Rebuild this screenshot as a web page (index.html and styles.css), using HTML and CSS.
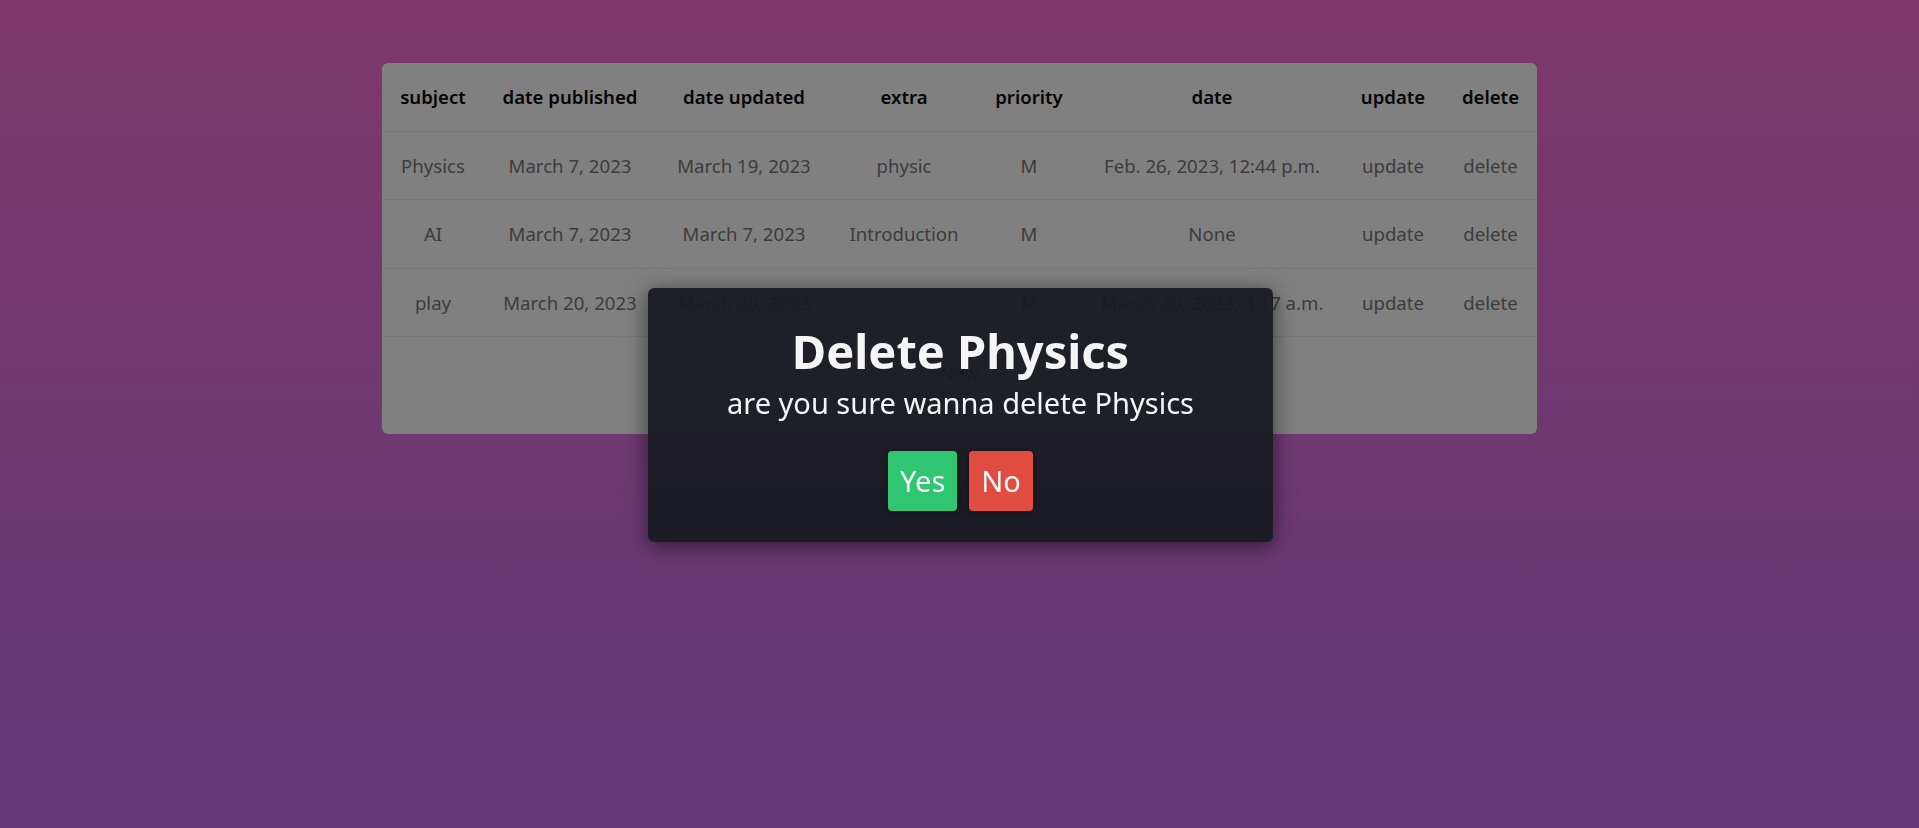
FILE: index.html
```html
<!DOCTYPE html>
<html lang="en">
<head>
<meta charset="utf-8">
<title>Subjects</title>
<link rel="stylesheet" href="styles.css">
</head>
<body>
<main class="page">
  <section class="card">
    <table class="table">
      <colgroup>
        <col class="c1"><col class="c2"><col class="c3"><col class="c4"><col class="c5"><col class="c6"><col class="c7"><col class="c8">
      </colgroup>
      <thead>
        <tr>
          <th>subject</th><th>date published</th><th>date updated</th><th>extra</th><th>priority</th><th>date</th><th>update</th><th>delete</th>
        </tr>
      </thead>
      <tbody>
        <tr>
          <td>Physics</td><td>March 7, 2023</td><td>March 19, 2023</td><td>physic</td><td>M</td><td>Feb. 26, 2023, 12:44 p.m.</td><td>update</td><td>delete</td>
        </tr>
        <tr>
          <td>AI</td><td>March 7, 2023</td><td>March 7, 2023</td><td>Introduction</td><td>M</td><td>None</td><td>update</td><td>delete</td>
        </tr>
        <tr>
          <td>play</td><td>March 20, 2023</td><td>March 20, 2023</td><td></td><td>M</td><td>March 20, 2023, 3:17 a.m.</td><td>update</td><td>delete</td>
        </tr>
      </tbody>
    </table>
    <div class="card-footer">
      <span class="new-btn">New</span>
    </div>
  </section>
</main>

<div class="modal">
  <h1 class="modal-title">Delete Physics</h1>
  <p class="modal-text">are you sure wanna delete Physics</p>
  <div class="modal-actions">
    <button class="btn btn-yes">Yes</button>
    <button class="btn btn-no">No</button>
  </div>
</div>
</body>
</html>
```

FILE: styles.css
```css
html, body {
  margin: 0;
  padding: 0;
  height: 100%;
}

body {
  background: linear-gradient(to bottom, #7e3869 0%, #623879 100%);
  font-family: "Noto Sans", "Open Sans", sans-serif;
  overflow: hidden;
}

.page {
  display: flex;
  justify-content: center;
  padding-top: 63px;
}

.card {
  width: 1155px;
  background: #808080;
  border-radius: 6px;
  overflow: hidden;
}

.table {
  width: 100%;
  border-collapse: collapse;
  table-layout: fixed;
  text-align: center;
  font-size: 18.6px;
}

.c1 { width: 102px; }
.c2 { width: 172px; }
.c3 { width: 176px; }
.c4 { width: 144px; }
.c5 { width: 106px; }
.c6 { width: 260px; }
.c7 { width: 102px; }
.c8 { width: 93px; }

.table th,
.table td {
  height: 67.5px;
  padding: 0;
  border-bottom: 1px solid #787878;
  white-space: nowrap;
}

.table th {
  color: #050505;
  font-weight: 600;
}

.table td {
  color: #3c3c3c;
  font-weight: 400;
}

.card-footer {
  display: flex;
  justify-content: center;
  padding: 15px 0 42px;
}

.new-btn {
  display: flex;
  align-items: center;
  height: 40px;
  color: #3c3c3c;
  font-size: 18.6px;
}

.modal {
  position: fixed;
  top: 288px;
  left: 648px;
  width: 625px;
  height: 254px;
  box-sizing: border-box;
  background: rgba(24, 26, 35, 0.95);
  border-radius: 6px;
  box-shadow: 0 4px 22px rgba(0, 0, 0, 0.55);
  display: flex;
  flex-direction: column;
  align-items: center;
  padding-top: 36px;
  color: #f5f5f5;
}

.modal-title {
  margin: 0;
  font-size: 47px;
  font-weight: 700;
  line-height: 55px;
}

.modal-text {
  margin: 7px 0 0;
  font-size: 29px;
  line-height: 1.2;
}

.modal-actions {
  display: flex;
  gap: 12px;
  margin-top: 30px;
}

.btn {
  border: none;
  border-radius: 4px;
  height: 60px;
  padding: 0 12px;
  font-family: inherit;
  font-size: 29px;
  color: #f8f8f8;
  box-shadow: 0 2px 6px rgba(0, 0, 0, 0.35);
}

.btn-yes { background: #2fc571; }
.btn-no { background: #e14c40; }
```
